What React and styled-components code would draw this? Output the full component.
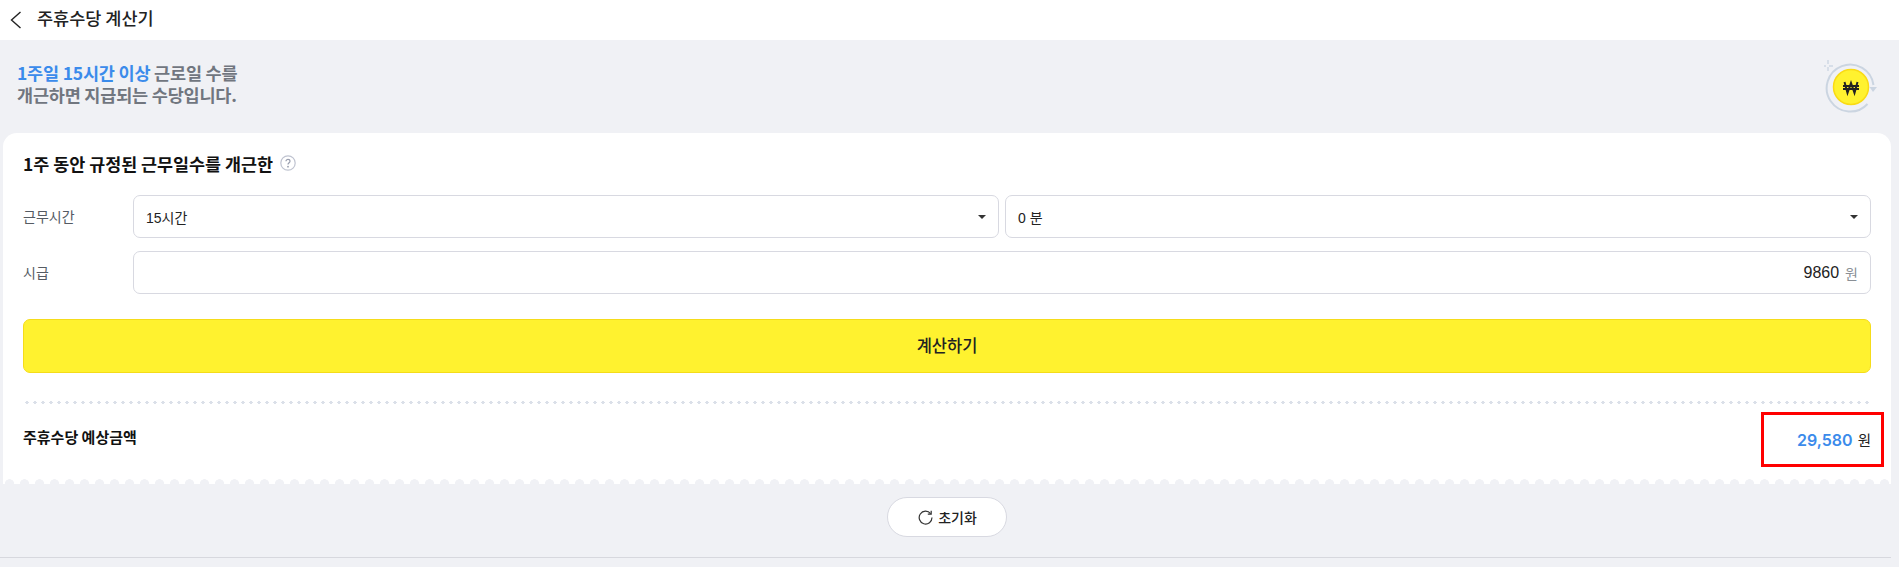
import React from "react";
import styled, { createGlobalStyle } from "styled-components";

const Global = createGlobalStyle`
  html, body { margin: 0; padding: 0; background: #f0f1f5; overflow: hidden; }
  body { font-family: "Noto Sans CJK KR", "Noto Sans", sans-serif; color: #111; }
  * { box-sizing: border-box; }
`;
const Page = styled.div`width: 1899px; height: 567px; display: flex; flex-direction: column;`;
const Header = styled.header`height: 40px; background: #fff; display: flex; align-items: center; padding-left: 10px; gap: 15px;`;
const HeaderTitle = styled.h1`margin: 0; font-size: 17.5px; font-weight: 500; line-height: 36px; color: #222; padding-bottom: 4px;`;
const Intro = styled.section`height: 93px; padding: 22px 8px 0 17px; display: flex; justify-content: space-between; position: relative;`;
const IntroText = styled.p`margin: 0; font-size: 17.5px; line-height: 22px; font-weight: 700; color: #71767f; letter-spacing: -0.2px;`;
const Blue = styled.span`color: #3b8beb;`;
const Card = styled.main`margin: 0 8px 0 3px; height: 351px; background: #fff; border-radius: 14px 14px 0 0; padding: 18px 20px 0; display: flex; flex-direction: column; position: relative;`;
const TitleRow = styled.div`display: flex; align-items: center; gap: 7px; height: 24px; margin-bottom: 20px;`;
const Title = styled.h2`margin: 0; font-size: 17.4px; font-weight: 700; color: #111;`;
const Row = styled.div`display: grid; grid-template-columns: 110px 1fr; align-items: center; height: 43px; margin-bottom: 13px;`;
const Label = styled.label`font-size: 14px; color: #555b63; padding-bottom: 2px;`;
const Pair = styled.div`display: grid; grid-template-columns: 1fr 1fr; gap: 6px;`;
const Field = styled.div`height: 43px; border: 1px solid #d8d9e1; border-radius: 7px; background: #fff; padding: 0 12px 0 12px; display: flex; align-items: center; justify-content: space-between; font-size: 14px; color: #222; font-family: "Liberation Sans", "Noto Sans CJK KR", sans-serif;`;
const Caret = styled.span`width: 0; height: 0; border-left: 4px solid transparent; border-right: 4px solid transparent; border-top: 4px solid #333;`;
const Amount = styled(Field)`justify-content: flex-end; gap: 6px; font-size: 16px;`;
const Unit = styled.span`color: #8a8f96; font-size: 14px;`;
const CalcButton = styled.button`height: 54px; margin-top: 12px; background: #fff22f; border: 1px solid #f5dc1a; border-radius: 7px; padding: 0 0 2px; font: 500 16.5px "Noto Sans CJK KR", sans-serif; color: #222;`;
const Dots = styled.div`height: 3px; margin-top: 28px; background-image: radial-gradient(circle, #dbe0e9 1.5px, transparent 1.7px); background-size: 8px 3px; background-repeat: repeat-x;`;
const ResultRow = styled.div`display: flex; justify-content: space-between; align-items: center; height: 40px; margin-top: 14px;`;
const ResultLabel = styled.span`font-size: 15px; font-weight: 700; color: #111; padding-bottom: 4px;`;
const ResultValue = styled.span`display: flex; align-items: baseline; gap: 5px; font-size: 14.5px; color: #222; padding-top: 3px;`;
const ResultNumber = styled.b`font: 600 16px Inter, "Liberation Sans", sans-serif; color: #3b8beb;`;
const Highlight = styled.div`position: absolute; left: 1758px; top: 279px; width: 123px; height: 55px; border: 3px solid #f00; pointer-events: none;`;
const Scallop = styled.div`position: absolute; left: 0; right: 0; bottom: 0; height: 5px; background-image: radial-gradient(circle at 50% 100%, #f0f1f5 4.5px, transparent 5px); background-size: 15px 5px; background-position: -1px 0; background-repeat: repeat-x;`;
const Footer = styled.div`display: flex; justify-content: center; margin: 13px 6px 0 0;`;
const ResetButton = styled.button`width: 120px; height: 40px; border: 1px solid #d8d9e1; border-radius: 20px; background: #fff; display: flex; align-items: center; justify-content: center; gap: 5px; font: 500 14px "Noto Sans CJK KR", sans-serif; color: #222; padding: 0 0 0 2px;`;
const Rule = styled.hr`margin: 20px 8px 0 0; height: 1px; border: 0; background: #d7d8de;`;
const HelpIcon = styled.svg`width: 16px; height: 16px;`;
const CoinIcon = styled.svg`position: absolute; top: 20px; right: 21px; width: 54px; height: 54px;`;

const Chevron = () => (
  <svg width="12" height="20" viewBox="0 0 12 20" fill="none"><path d="M10.5 2 L1.5 10 L10.5 18" stroke="#222" strokeWidth="1.4" /></svg>
);
const Help = () => (
  <HelpIcon viewBox="0 0 16 16" fill="none">
    <circle cx="8" cy="8" r="7.2" stroke="#bfc3d0" strokeWidth="1.2" />
    <path d="M6 6.3 C6 3.8 10 3.8 10 6.3 C10 7.8 8 7.7 8 9.6" stroke="#999eae" strokeWidth="1.2" />
    <circle cx="8" cy="11.7" r="0.9" fill="#999eae" />
  </HelpIcon>
);
const Coin = () => (
  <CoinIcon viewBox="0 0 54 54" fill="none">
    <path d="M49.5 25 A23.5 23.5 0 1 0 43.5 44" stroke="#cbd5e1" strokeWidth="2" />
    <path d="M45.5 27 H53 L49 32 Z" fill="#cbd5e1" />
    <circle cx="27" cy="27" r="17.5" fill="#fff22f" stroke="#fadb14" strokeWidth="1.5" />
    <path d="M4 0 V12 M-2 6 H10" stroke="#d7dee8" strokeWidth="2" strokeDasharray="4 3" />
    <path d="M20.5 22 L23.5 33 L27 23 L30.5 33 L33.5 22 M19 26 H35 M19 29 H35" stroke="#222" strokeWidth="2" />
  </CoinIcon>
);
const Refresh = () => (
  <svg width="15" height="15" viewBox="0 0 15 15" fill="none">
    <path d="M12.6 3.6 A6.4 6.4 0 1 0 14 7.5" stroke="#333" strokeWidth="1.2" />
    <path d="M13.2 0.8 V4.2 H9.8" stroke="#333" strokeWidth="1.2" />
  </svg>
);

export default function App() {
  return (
    <Page>
      <Global />
      <Header><Chevron /><HeaderTitle>주휴수당 계산기</HeaderTitle></Header>
      <Intro>
        <IntroText><Blue>1주일 15시간 이상</Blue> 근로일 수를<br />개근하면 지급되는 수당입니다.</IntroText>
        <Coin />
      </Intro>
      <Card>
        <TitleRow><Title>1주 동안 규정된 근무일수를 개근한</Title><Help /></TitleRow>
        <Row>
          <Label>근무시간</Label>
          <Pair>
            <Field>15시간<Caret /></Field>
            <Field>0 분<Caret /></Field>
          </Pair>
        </Row>
        <Row>
          <Label>시급</Label>
          <Amount>9860<Unit>원</Unit></Amount>
        </Row>
        <CalcButton>계산하기</CalcButton>
        <Dots />
        <ResultRow>
          <ResultLabel>주휴수당 예상금액</ResultLabel>
          <ResultValue><ResultNumber>29,580</ResultNumber>원</ResultValue>
        </ResultRow>
        <Highlight />
        <Scallop />
      </Card>
      <Footer><ResetButton><Refresh />초기화</ResetButton></Footer>
      <Rule />
    </Page>
  );
}
